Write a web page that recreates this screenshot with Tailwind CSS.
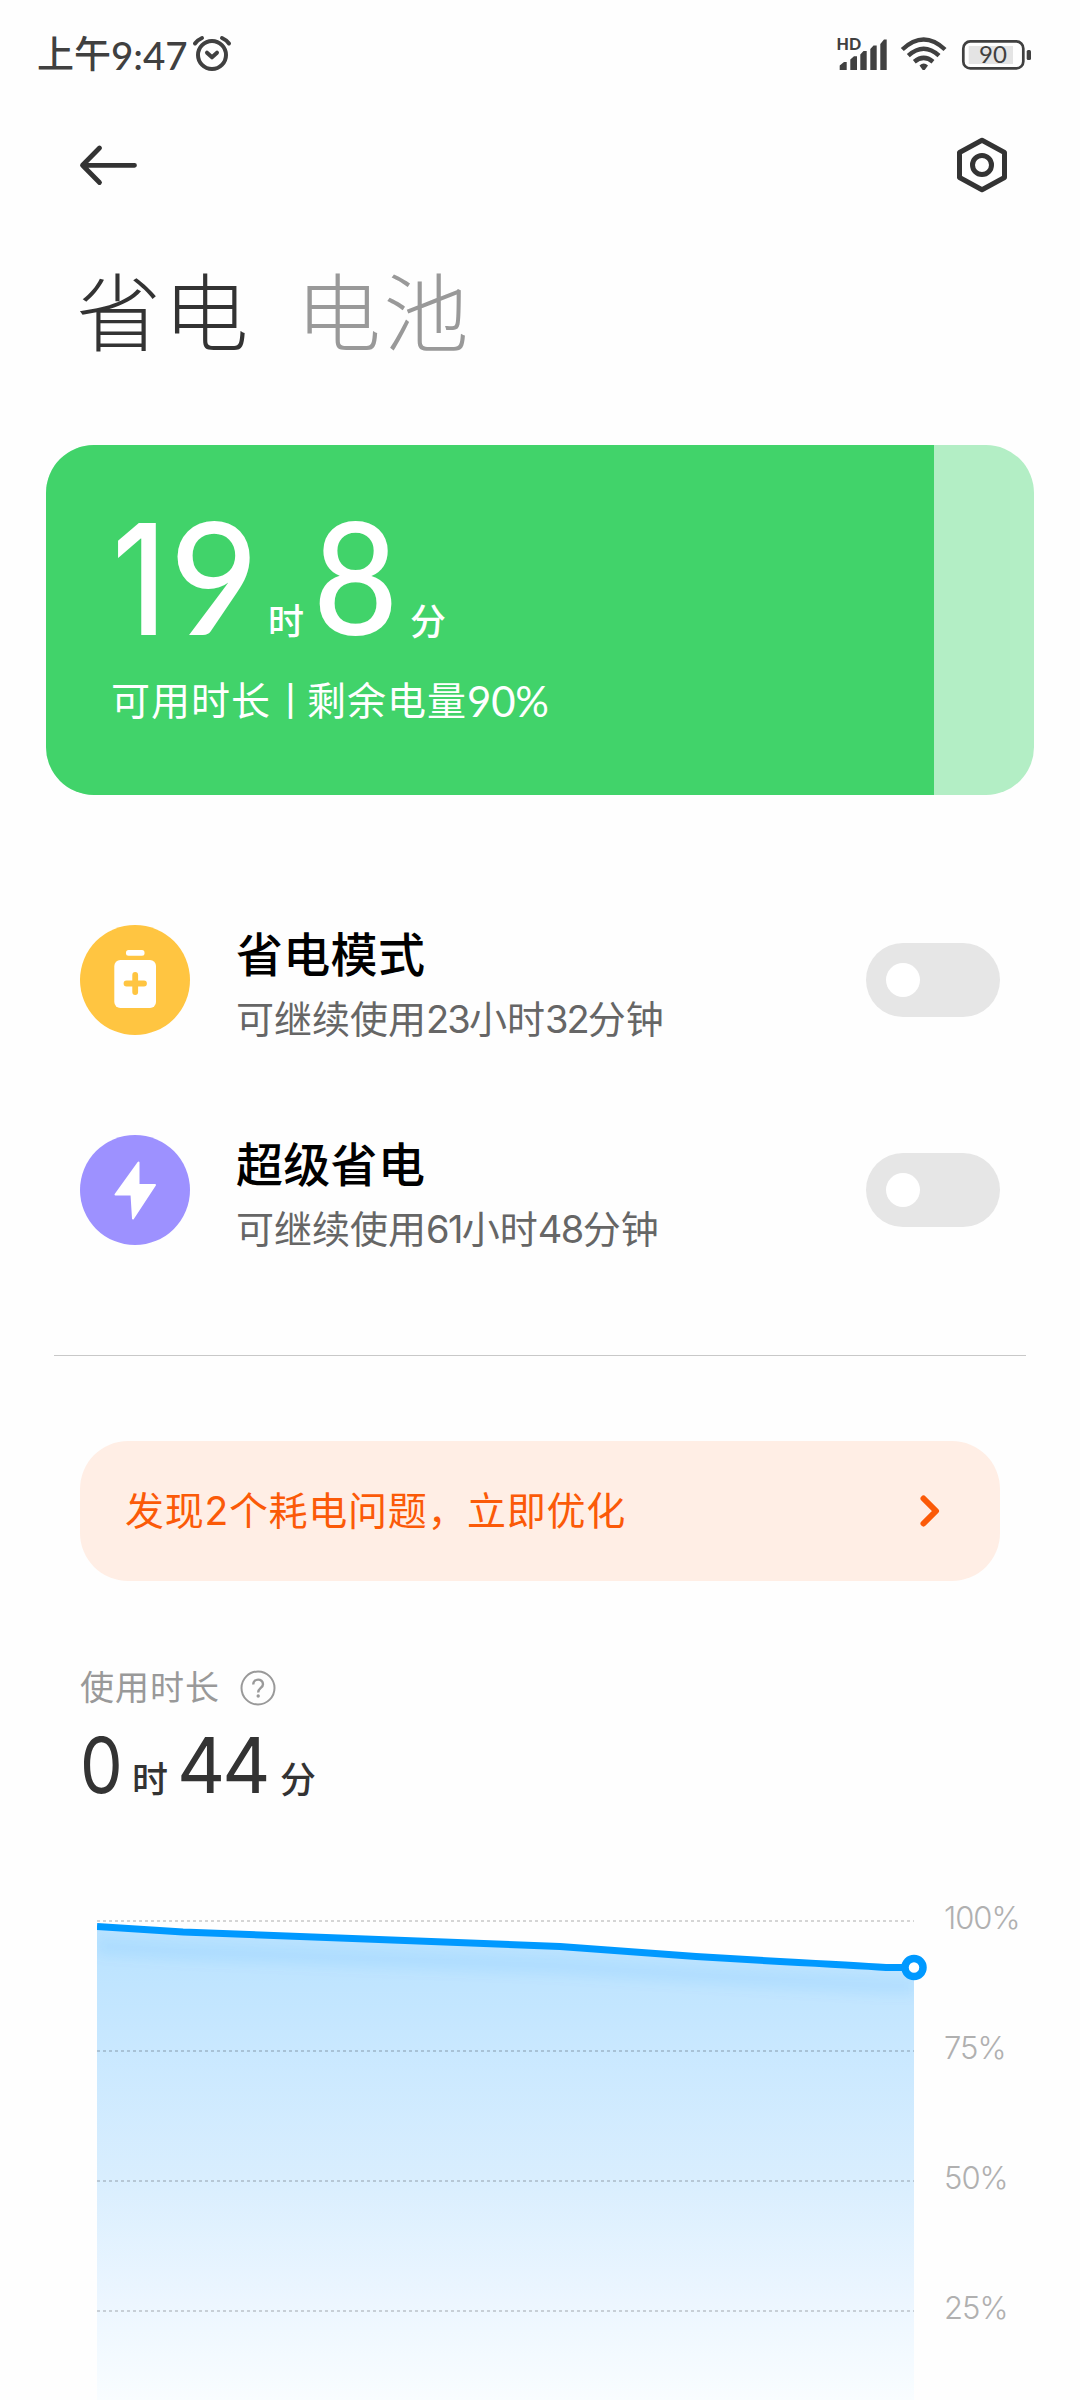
<!DOCTYPE html>
<html lang="zh-CN">
  <head>
    <meta charset="utf-8" />
    <title>省电与电池</title>
    <script src="https://cdn.jsdelivr.net/npm/@tailwindcss/browser@4"></script>
  </head>
  <body
    class="bg-[#fefefe] w-[1080px] h-[2400px] overflow-hidden font-[Inter,'Noto_Sans_CJK_SC',sans-serif] text-[#333]"
  >
    <!-- Status bar -->
    <header class="flex items-center h-[110px] pl-[37px] pr-[48px] text-[#404040]">
      <div class="flex items-center text-[37px] leading-[36px] font-medium">
        <span>上午</span>
        <span class="w-[76px] font-[Lato,sans-serif] text-[38.5px]">9:47</span>
      </div>
      <svg class="ml-[5px] w-[40px] h-[40px]" viewBox="0 0 40 40" fill="none" stroke="currentColor" stroke-width="4" stroke-linecap="round" stroke-linejoin="round">
        <circle cx="20" cy="20" r="14" />
        <path d="M15 17.7L20 22.3L25 17.7" />
        <path d="M3 8.500Q5.500 5 10 3M30 3Q34.500 5 37 8.500" />
      </svg>
      <div class="ml-auto flex items-center">
        <svg class="w-[53px] h-[48px]" viewBox="-1 -6 53 48" fill="currentColor">
          <text x="-0.500" y="13" font-family="Lato" font-weight="900" font-size="16">HD</text>
          <path d="M2.700 33V28.500L7 25H9.700V33ZM13.300 33V22.500L17 19.300H20V33ZM23.300 33V17.500L26.500 14H29.700V33ZM33.300 33V12L36.500 8.500H39.700V33ZM43.300 33V7L47 2.500H49.700V33Z" />
        </svg>
        <svg class="ml-[11px] w-[48px] h-[36px]" viewBox="0 0 48 36" fill="none" stroke="currentColor" stroke-width="4.400">
          <path d="M2.300 12.500Q23.700 -7.500 45 12.500" />
          <path d="M8.300 18.600Q23.700 4.800 39 18.600" />
          <path d="M14.300 24.800Q23.700 17 33 24.800" />
          <path d="M19.500 28.500Q23.700 24.500 28 28.500L24.700 33H22.700Z" fill="currentColor" stroke="none" />
        </svg>
        <svg class="ml-[12px] mr-[1px] w-[71px] h-[32px]" viewBox="0 0 71 32" fill="none">
          <rect x="3.300" y="2.400" width="60" height="27" rx="7" stroke="currentColor" stroke-width="2.700" />
          <rect x="8.700" y="7" width="44.300" height="18" fill="#e4e4e4" />
          <rect x="66.700" y="11" width="4.300" height="10" rx="1.500" fill="currentColor" />
          <text x="33" y="24" text-anchor="middle" font-family="Lato" font-size="24" fill="currentColor">90</text>
        </svg>
      </div>
    </header>

    <!-- Navigation -->
    <nav class="flex items-center justify-between h-[110px] pl-[79px] pr-[72px]">
      <svg class="w-[60px] h-[42px]" viewBox="0 0 60 42" fill="none" stroke="currentColor" stroke-width="4.800" stroke-linecap="round" stroke-linejoin="round">
        <path d="M55.500 21.300H3.500M20.500 4L3.500 21.300L20.500 38.500" />
      </svg>
      <svg class="w-[52px] h-[56px]" viewBox="0 0 52 56" fill="none" stroke="currentColor" stroke-width="5" stroke-linejoin="round">
        <path d="M26 3.300L48.500 15.500V40.500L26 52.700L3.500 40.500V15.500Z" />
        <circle cx="26" cy="28" r="9.500" />
      </svg>
    </nav>

    <!-- Tabs -->
    <div class="flex h-[225px] pt-[49px] pl-[76px] text-[85px] leading-[92px] tracking-[2.5px] font-light">
      <span>省电</span>
      <span class="ml-[45px] text-[#999]">电池</span>
    </div>

    <!-- Remaining battery card -->
    <section class="mx-[46px] h-[350px] rounded-[48px] overflow-hidden bg-[#b3eec5] text-white">
      <div class="w-[888px] h-full bg-[#41d36a] pl-[66px] pt-[65px]">
        <div class="flex items-baseline h-[156px] leading-[130px] text-[36px] font-medium">
          <span class="w-[58px] text-[154px] origin-left scale-x-[0.85]">1</span>
          <span class="w-[90px] font-[Lato,sans-serif] text-[156px] origin-left scale-x-[0.98]">9</span>
          <span class="ml-[8px]">时</span>
          <span class="ml-[9px] w-[90px] font-[Lato,sans-serif] text-[156px] origin-left scale-x-[0.94]">8</span>
          <span class="ml-[7px]">分</span>
        </div>
        <p class="-ml-[1px] flex text-[39px] leading-[70px]">
          <span class="tracking-[1px]">可用时长</span>
          <span class="w-[36px] text-center">丨</span>
          <span class="tracking-[1px]">剩余电量</span>
          <span class="font-[Lato,sans-serif] text-[42px] tracking-[-0.2px]">90%</span>
        </p>
      </div>
    </section>

    <!-- Power saving modes -->
    <section class="pt-[130px] px-[80px]">
      <div class="flex items-center h-[110px]">
        <svg class="w-[110px] h-[110px]" viewBox="0 0 110 110">
          <circle cx="55" cy="55" r="55" fill="#ffc541" />
          <rect x="46" y="25" width="18.500" height="5.700" rx="2.500" fill="#fff" />
          <rect x="34.300" y="35" width="41.700" height="48" rx="6" fill="#fff" />
          <path d="M55.200 50V67M46.500 58.500H64" stroke="#ffc541" stroke-width="5.800" stroke-linecap="round" />
        </svg>
        <div class="ml-[46px] pt-[15px]">
          <h2 class="text-[47px] leading-[62px] tracking-[0.3px] font-medium text-black">省电模式</h2>
          <p class="text-[38px] leading-[66px] text-[#666]">可继续使用<span class="tracking-[-1.9px]">23</span>小时<span class="tracking-[-1.9px]">32</span>分钟</p>
        </div>
        <div class="ml-auto w-[134px] h-[74px] rounded-full bg-[#e6e6e6] p-[20px]">
          <div class="w-[34px] h-[34px] rounded-full bg-white"></div>
        </div>
      </div>
      <div class="flex items-center h-[110px] mt-[100px]">
        <svg class="w-[110px] h-[110px]" viewBox="0 0 110 110">
          <circle cx="55" cy="55" r="55" fill="#9d91ff" />
          <path d="M58.500 27.500V50H75L53 83.500L51.500 59.500H35.500Z" fill="#fff" stroke="#fff" stroke-width="2" stroke-linejoin="round" />
        </svg>
        <div class="ml-[46px] pt-[15px]">
          <h2 class="text-[47px] leading-[62px] tracking-[0.3px] font-medium text-black">超级省电</h2>
          <p class="text-[38px] leading-[66px] text-[#666]">可继续使用<span class="tracking-[-1.6px]">61</span>小时<span class="tracking-[-1.6px]">48</span>分钟</p>
        </div>
        <div class="ml-auto w-[134px] h-[74px] rounded-full bg-[#e6e6e6] p-[20px]">
          <div class="w-[34px] h-[34px] rounded-full bg-white"></div>
        </div>
      </div>
    </section>

    <hr class="mt-[110px] mx-[54px] border-t border-[#c8c8c8]" />

    <!-- Battery issues -->
    <a class="mt-[85px] mx-[80px] h-[140px] flex items-center justify-between rounded-[48px] bg-[#ffeee5] pl-[45px] pr-[58px] text-[#fb5a08]">
      <span class="text-[39px] leading-[60px] tracking-[0.7px]">发现2个耗电问题，立即优化</span>
      <svg class="w-[24px] h-[36px]" viewBox="0 0 24 36" fill="none" stroke="currentColor" stroke-width="6" stroke-linecap="round" stroke-linejoin="round">
        <path d="M5.500 5.500L18 18L5.500 30.500" />
      </svg>
    </a>

    <!-- Usage time -->
    <section class="mt-[82px] px-[80px]">
      <div class="flex items-center h-[50px] text-[34px] leading-[50px] tracking-[1px] text-[#999]">
        <span>使用时长</span>
        <svg class="ml-[20px] w-[36px] h-[36px]" viewBox="0 0 36 36" fill="none" stroke="currentColor" stroke-width="2">
          <circle cx="18" cy="18" r="16.500" />
          <path d="M13.200 14.500C13.200 8 23 8 23 14.200C23 18 18.200 18 18.200 22.500" stroke-width="2.400" />
          <circle cx="18.200" cy="26" r="1.700" fill="currentColor" stroke="none" />
        </svg>
      </div>
      <div class="flex items-baseline h-[112px] pt-[10px] text-[36px] leading-[84px] font-medium">
        <span class="w-[51px] text-[77px] font-normal origin-left scale-x-[0.88]">0</span>
        <span class="ml-[1px]">时</span>
        <span class="ml-[9px] w-[103px] text-[77px] tracking-[-3px] font-normal origin-left scale-x-[0.97]">44</span>
        <span>分</span>
      </div>
    </section>

    <!-- Battery level chart -->
    <section class="mt-[75px] flex pl-[97px]">
      <svg class="w-[831px] h-[500px]" viewBox="0 0 831 500">
        <defs>
          <linearGradient id="fill" x1="0" y1="0" x2="0" y2="500" gradientUnits="userSpaceOnUse">
            <stop offset="0.050" stop-color="#b8e2ff" />
            <stop offset="0.300" stop-color="#c9e8ff" />
            <stop offset="0.560" stop-color="#d9eefe" />
            <stop offset="0.800" stop-color="#ecf6ff" />
            <stop offset="1" stop-color="#f9fdff" />
          </linearGradient>
          <filter id="soft" x="-5%" y="-50%" width="110%" height="220%">
            <feGaussianBlur stdDeviation="6" />
          </filter>
          <clipPath id="area">
            <path d="M0 26.500L86 32L463 46.500L599 55.500L683 60L789 67.500H817V500H0Z" />
          </clipPath>
        </defs>
        <g clip-path="url(#area)">
          <rect width="817" height="500" fill="url(#fill)" />
          <path d="M0 46L86 51.500L463 66L599 75L683 80L789 86H817" fill="none" stroke="#0091ff" stroke-opacity="0.070" stroke-width="18" filter="url(#soft)" />
        </g>
        <path d="M0 21H817M0 151H817M0 281H817M0 411H817" stroke="#000" stroke-opacity="0.160" stroke-width="2" stroke-dasharray="3" />
        <path d="M0 26.500L86 32L463 46.500L599 56.500L683 61.500Q760 65.500 789 67.500H817" fill="none" stroke="#0099ff" stroke-width="7" />
        <circle cx="817" cy="67.500" r="9" fill="#fff" stroke="#0099ff" stroke-width="7.500" />
      </svg>
      <div class="-mt-[2px] ml-[16px] flex flex-col gap-[90px] text-[31px] leading-[40px] tracking-[-1px] font-light text-[#b0b0b0]">
        <span>100%</span>
        <span>75%</span>
        <span>50%</span>
        <span>25%</span>
      </div>
    </section>
  </body>
</html>
